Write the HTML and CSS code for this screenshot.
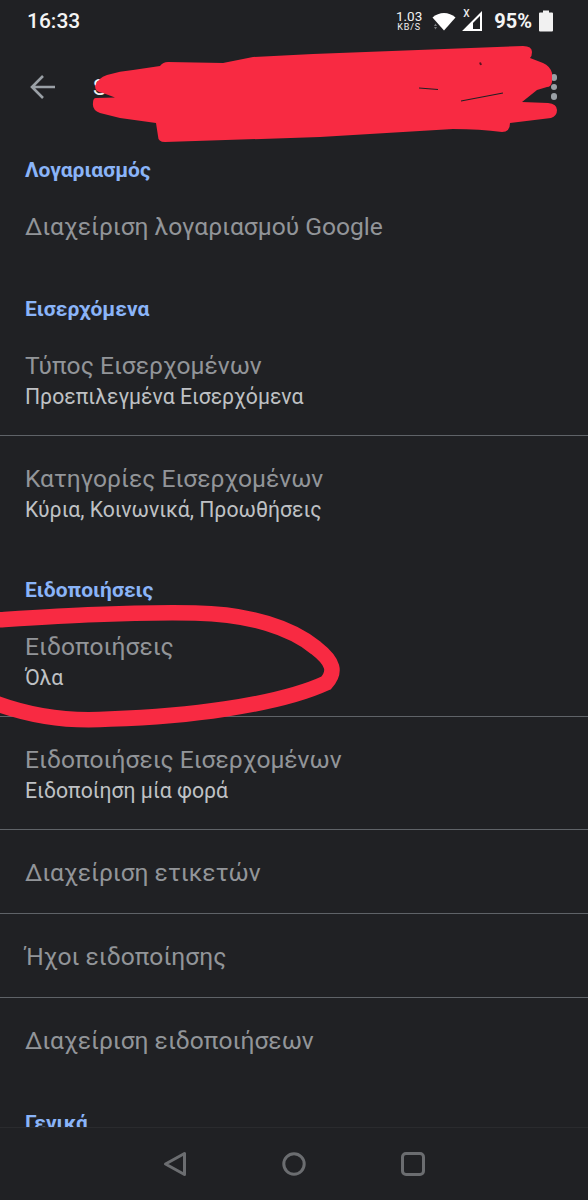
FILE: index.html
```html
<!DOCTYPE html>
<html lang="el">
<head>
    <meta charset="UTF-8">
    <meta name="viewport" content="width=device-width, initial-scale=1.0">
    <title>Ρυθμίσεις</title>
    <link rel="stylesheet" href="styles.css">
</head>
<body>
    <div class="screen">
        <header class="status-bar">
            <span class="clock">16:33</span>
            <div class="status-icons">
                <div class="speed">
                    <span class="speed-value">1.03</span>
                    <span class="speed-unit">KB/S</span>
                </div>
                <svg class="wifi" width="24" height="20" viewBox="0 0 24 20">
                    <path d="M0.5 6.5 C7 0.5 17 0.5 23.5 6.5 L12 19.5 Z" fill="#fff"/>
                    <path d="M3.5 12.5 L5 15 H2 Z M3.5 18.5 L5 16 H2 Z" fill="#77797c"/>
                </svg>
                <div class="signal">
                    <svg width="20" height="20" viewBox="0 0 20 20">
                        <path d="M19 2.5 V19 H2.5 Z" fill="none" stroke="#fff" stroke-width="2"/>
                        <path d="M11 10.5 V19 H2.5 Z" fill="#fff"/>
                    </svg>
                    <span class="signal-x">X</span>
                </div>
                <span class="battery-text">95%</span>
                <svg class="battery" width="14" height="22" viewBox="0 0 14 22">
                    <path d="M4 0.5 H10 V2.5 H13 Q14 2.5 14 3.5 V20.5 Q14 21.5 13 21.5 H1 Q0 21.5 0 20.5 V3.5 Q0 2.5 1 2.5 H4 Z" fill="#f1f1f1"/>
                </svg>
            </div>
        </header>

        <div class="toolbar">
            <svg class="back-arrow" width="26" height="26" viewBox="0 0 26 26">
                <path d="M25 13 H2 M13 2 L2 13 L13 24" fill="none" stroke="#9aa0a6" stroke-width="2.6"/>
            </svg>
            <span class="account">S</span>
            <div class="more-dots">
                <span></span>
                <span></span>
                <span></span>
            </div>
        </div>

        <main class="settings">
            <h2 class="section first">Λογαριασμός</h2>
            <div class="item">
                <div class="item-title">Διαχείριση λογαριασμού Google</div>
            </div>

            <h2 class="section">Εισερχόμενα</h2>
            <div class="item two-line divided">
                <div class="item-title">Τύπος Εισερχομένων</div>
                <div class="item-sub">Προεπιλεγμένα Εισερχόμενα</div>
            </div>
            <div class="item two-line">
                <div class="item-title">Κατηγορίες Εισερχομένων</div>
                <div class="item-sub">Κύρια, Κοινωνικά, Προωθήσεις</div>
            </div>

            <h2 class="section">Ειδοποιήσεις</h2>
            <div class="item two-line divided">
                <div class="item-title">Ειδοποιήσεις</div>
                <div class="item-sub">Όλα</div>
            </div>
            <div class="item two-line divided">
                <div class="item-title">Ειδοποιήσεις Εισερχομένων</div>
                <div class="item-sub">Ειδοποίηση μία φορά</div>
            </div>
            <div class="item divided">
                <div class="item-title">Διαχείριση ετικετών</div>
            </div>
            <div class="item divided">
                <div class="item-title">Ήχοι ειδοποίησης</div>
            </div>
            <div class="item">
                <div class="item-title">Διαχείριση ειδοποιήσεων</div>
            </div>

            <h2 class="section">Γενικά</h2>
        </main>

        <nav class="nav-bar">
            <svg width="24" height="26" viewBox="0 0 24 26">
                <path d="M21.5 2.5 V23.5 L2.5 13 Z" fill="none" stroke="#6b6d70" stroke-width="3" stroke-linejoin="round"/>
            </svg>
            <svg width="24" height="26" viewBox="0 0 24 26">
                <circle cx="12" cy="13" r="10.2" fill="none" stroke="#6b6d70" stroke-width="3"/>
            </svg>
            <svg width="24" height="26" viewBox="0 0 24 26">
                <rect x="1.5" y="2.5" width="21" height="21" rx="3.5" fill="none" stroke="#6b6d70" stroke-width="3"/>
            </svg>
        </nav>

        <!-- red marker drawn over the screenshot -->
        <svg class="scribble" width="588" height="1200" viewBox="0 0 588 1200">
            <path d="M95 86 Q98 78 107 75 Q120 71 133 70 L160 66 Q163 62 168 62 L223 63 L253 57 L313 54 L523 46 Q532 46 532 52 Q532 56 530 58 L543 63 Q550 66 552 73 L552 82 Q551 87 547 87 L537 90 L522 102 L548 103 Q557 104 557 110 Q557 116 551 118 L510 123 Q510 132 502 132 Q480 129 453 129 L320 137 L165 142 Q158 142 158 136 L156 123 L120 118 L100 113 Q92 110 93 103 Q93 98 96 98 L115 97.5 L103 93 Q95 92 95 86 Z" fill="#f82a42"/>
            <path d="M419 88 L438 89.5 M461 101 L503 93" fill="none" stroke="#202124" stroke-width="1.2"/>
            <path d="M480 62.5 L481 65" fill="none" stroke="#5a1420" stroke-width="2"/>
            <path d="M-5 620 C60 616 120 612 195 613 C250 614 292 628 316 648 C334 662 336 672 326 683 C300 695 265 703 225 709 C180 716 140 718 110 719 C70 722 30 716 -5 703" fill="none" stroke="#f82a42" stroke-width="15.5" stroke-linecap="round"/>
        </svg>
    </div>
</body>
</html>
```

FILE: styles.css
```css
body {
    font-family: Roboto, "Noto Sans", sans-serif;
    background-color: #202124;
    color: #fff;
    margin: 0;
    padding: 0;
}

.screen {
    position: relative;
    display: flex;
    flex-direction: column;
    height: 1200px;
    overflow: hidden;
}

.status-bar {
    display: flex;
    align-items: center;
    justify-content: space-between;
    height: 44px;
    padding: 0 35px 2px 27px;
    box-sizing: border-box;
}

.clock {
    font-size: 21px;
    font-weight: 500;
    color: #f4f4f4;
}

.status-icons {
    display: flex;
    align-items: center;
}

.speed {
    display: flex;
    flex-direction: column;
    align-items: center;
    margin-right: 10px;
    color: #f1f1f1;
}

.speed-value {
    font-size: 13.5px;
    line-height: 12px;
}

.speed-unit {
    font-size: 9px;
    line-height: 10px;
    letter-spacing: 0.8px;
}

.wifi {
    margin-right: 6px;
}

.signal {
    position: relative;
    display: flex;
    margin-right: 12px;
}

.signal-x {
    position: absolute;
    left: 1px;
    top: -2px;
    font-size: 10px;
    font-weight: 500;
    line-height: 10px;
    color: #f1f1f1;
}

.battery-text {
    font-size: 20px;
    font-weight: 700;
    margin-right: 7px;
    color: #f4f4f4;
}

.toolbar {
    display: flex;
    align-items: center;
    height: 86px;
    padding: 0 30px 0 30px;
    box-sizing: border-box;
}

.back-arrow {
    margin-right: 37px;
}

.account {
    flex: 1;
    font-size: 22px;
    color: #f1f1f1;
}

.more-dots {
    display: flex;
    flex-direction: column;
    gap: 3px;
    margin-right: 1px;
}

.more-dots span {
    width: 6.5px;
    height: 6.5px;
    border-radius: 50%;
    background-color: #9aa0a6;
}

.settings {
    flex: 1;
    overflow: hidden;
}

.section {
    margin: 0;
    padding: 29px 25px 0;
    font-size: 21px;
    font-weight: 700;
    line-height: 26px;
    color: #8ab4f8;
}

.section.first {
    padding-top: 27px;
}

.item {
    padding: 29px 0 25px 25px;
    height: 84px;
    box-sizing: border-box;
}

.item.two-line {
    height: 113px;
}

/* the rule sits one pixel into the next row */
.item.divided {
    height: 85px;
    margin-bottom: -1px;
    border-bottom: 1px solid #5f6368;
}

.item.two-line.divided {
    height: 114px;
}

.item-title {
    font-size: 24.6px;
    line-height: 30px;
    color: #929599;
}

.item-sub {
    font-size: 21.2px;
    line-height: 32px;
    color: #bfc1c4;
}

.nav-bar {
    display: flex;
    justify-content: center;
    align-items: center;
    gap: 95px;
    height: 73px;
    border-top: 1px solid #2a2b2e;
    box-sizing: border-box;
}

.scribble {
    position: absolute;
    left: 0;
    top: 0;
    pointer-events: none;
}
```
